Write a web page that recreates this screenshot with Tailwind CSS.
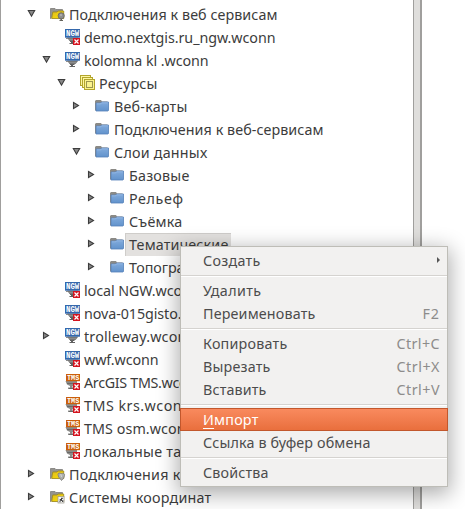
<!DOCTYPE html>
<html lang="ru">
<head>
<meta charset="utf-8">
<title>Каталог</title>
<script src="https://cdn.jsdelivr.net/npm/@tailwindcss/browser@4"></script>
</head>
<body class="bg-white">
<svg class="absolute w-0 h-0">
  <defs>
    <linearGradient id="gy" x1="0" y1="0" x2="1" y2="1"><stop offset="0" stop-color="#dcbc20"/><stop offset="1" stop-color="#ffe000"/></linearGradient>
    <linearGradient id="gb" x1="0" y1="0" x2="0" y2="1"><stop offset="0" stop-color="#82abdc"/><stop offset="1" stop-color="#6293cc"/></linearGradient>
    <symbol id="folder" viewBox="0 0 16 16">
      <path d="M0 12.5V3L1 2H6L7 3.5H12.5V12.5Z" fill="#8b8a86"/>
      <path d="M1 5H5.5L6.5 4H13.5V12.5L13 13H1Z" fill="url(#gb)" stroke="#5582b9" stroke-width=".8"/>
      <path d="M1.8 5.8H5.8L6.8 4.8H12.8" fill="none" stroke="#a0c2ea" stroke-width=".7"/>
    </symbol>
    <symbol id="yfolder" viewBox="0 0 16 16">
      <path d="M.5 12.5V2.5H5L6 3.5H12.5V6H3L1 12.5Z" fill="#94938f" stroke="#7d7c78" stroke-width=".8"/>
      <path d="M1.7 12.5L2.8 6H7L8 5H13.7V12.6Z" fill="url(#gy)" stroke="#a08d20" stroke-width=".9"/>
    </symbol>
    <symbol id="web" viewBox="0 0 16 16">
      <use href="#yfolder"/>
      <path d="M11.2 12.5V14.5" stroke="#66645c" stroke-width="1.5"/>
      <circle cx="11.2" cy="9.8" r="3.1" fill="#8d8d8b" stroke="#65645e" stroke-width=".8"/>
      <path d="M10 8.2L12 8.6L11 10.4Z" fill="#c9c9c5"/><path d="M9.5 14.5H13" stroke="#66645c"/>
    </symbol>
    <symbol id="dbf" viewBox="0 0 16 16">
      <use href="#yfolder"/>
      <path d="M8 8.5C8 6.6 10 7 11.2 7.5C13 6.8 15 7.5 14.5 9.5L13.7 12L11.5 14.5L10 12.5L8.6 11Z" fill="#aeb0ad" stroke="#797a76" stroke-width=".8"/>
      <path d="M10.8 8L11.5 11" stroke="#d8d9d6"/>
    </symbol>
    <symbol id="crs" viewBox="0 0 16 16">
      <use href="#yfolder"/>
      <rect x="8" y="7.5" width="6" height="6.5" fill="#f5f5f3" stroke="#99968a" stroke-width=".7"/>
      <path d="M9.3 10H11V8.7H12.8V10H12V11.3H13.3V13H12V12H10.5V13.3H9.5V11.5H10.5Z" fill="#444"/>
    </symbol>
    <symbol id="layers" viewBox="0 0 16 16">
      <rect x=".5" y=".5" width="10" height="10" fill="#fdf6a0" stroke="#b3a52b"/>
      <rect x="2.5" y="2.5" width="10" height="10" fill="#fdf6a0" stroke="#b3a52b"/>
      <rect x="4.5" y="4.5" width="10" height="10" fill="#fbf38c" stroke="#b3a52b"/>
      <rect x="6.5" y="6.5" width="6" height="6" fill="none" stroke="#3d3912" stroke-dasharray="1 1"/>
    </symbol>
    <symbol id="stand" viewBox="0 0 16 16">
      <path d="M2 8.5H13.5L10.5 12H4.5Z" fill="#777"/>
      <path d="M1 9.5H3M4 10.5H11" stroke="#8c8c8c"/>
      <path d="M5 12H9.5V13H8V14H10V15H4.5V14H6V13H5Z" fill="#606060"/>
    </symbol>
    <symbol id="ngw" viewBox="0 0 16 16">
      <use href="#stand"/><rect x="0" y="0" width="15" height="8.7" fill="#3568ac"/>
      <text x="1" y="7.2" textLength="13.2" lengthAdjust="spacingAndGlyphs" font-family="Liberation Mono, monospace" font-weight="bold" font-size="8.6" fill="#fff">NGW</text>
    </symbol>
    <symbol id="tms" viewBox="0 0 16 16">
      <path d="M.5 7H12V10.5L9 12H7.5V13.5H9.5V15H3V13.5H5V12L2 10.5Z" fill="#8b8b89"/>
      <path d="M2 9.5H9M4 14.5H9" stroke="#6a6a68"/>
      <rect x="1" y="0" width="14" height="7.2" fill="#cb5f0c"/>
      <text x="2" y="6.2" textLength="12.2" lengthAdjust="spacingAndGlyphs" font-family="Liberation Mono, monospace" font-weight="bold" font-size="8" fill="#fff">TMS</text>
    </symbol>
    <symbol id="off" viewBox="0 0 16 16">
      <rect x="8" y="9" width="7" height="7" fill="#d4141f"/>
      <path d="M9.5 10.5L13.5 14.5M13.5 10.5L9.5 14.5" stroke="#fff" stroke-width="1.2"/>
    </symbol>
    <symbol id="open" viewBox="0 0 9 9"><path d="M1.3 1.5H7.7L4.5 7.2Z" fill="#888" stroke="#3c3c3c" stroke-width="1.1"/></symbol>
    <symbol id="closed" viewBox="0 0 9 9"><path d="M1.5 1.5V7.5L6.5 4.5Z" fill="#888" stroke="#3c3c3c" stroke-width="1.1"/></symbol>
  </defs>
</svg>

<main class="relative flex w-[465px] h-[509px] overflow-hidden bg-white font-['Noto_Sans',sans-serif] text-[14.3px] leading-[23px] text-[#3c3c3c] whitespace-pre">
  <div class="w-px shrink-0 bg-[#a09f9d]"></div>
  <div id="tree" class="flex flex-col w-[412px] shrink-0 pt-[3px]"></div>
  <div class="w-[9px] shrink-0 border-l border-r-2 border-[#a09f9d] bg-[#dfdedc]"></div>
  <nav id="menu" class="absolute left-[180px] top-[246px] w-[268px] h-[241px] border border-[#bebdb7] bg-[#f2f1f0] py-[2px] text-[#4c4c4c] shadow-[0_5px_20px_2px_rgba(0,0,0,0.33)]"></nav>
</main>

<script>
// [level, arrow, icon, offline, label, label width]
const rows = [
  [0,'open','web',0,'Подключения к веб сервисам',207],
  [1,'','ngw',1,'demo.nextgis.ru_ngw.wconn',190],
  [1,'open','ngw',0,'kolomna kl .wconn',123],
  [2,'open','layers',0,'Ресурсы',57],
  [3,'closed','folder',0,'Веб-карты',72],
  [3,'closed','folder',0,'Подключения к веб-сервисам',208],
  [3,'open','folder',0,'Слои данных',92],
  [4,'closed','folder',0,'Базовые',59],
  [4,'closed','folder',0,'Рельеф',53],
  [4,'closed','folder',0,'Съёмка',52],
  [4,'closed','folder',0,'Тематические',98],
  [4,'closed','folder',0,'Топогра',54],
  [1,'','ngw',1,'local NGW.wconn',114],
  [1,'','ngw',1,'nova-015gisto.',96],
  [1,'closed','ngw',0,'trolleway.wconn',110],
  [1,'','ngw',1,'wwf.wconn',73],
  [1,'','tms',1,'ArcGIS TMS.wconn',119],
  [1,'','tms',1,'TMS krs.wconn',106],
  [1,'','tms',1,'TMS osm.wconn',109],
  [1,'','tms',1,'локальные та',96],
  [0,'closed','dbf',0,'Подключения к',110],
  [0,'closed','crs',0,'Системы координат',141]
];
const items = [
  ['Создать',56,'>'],0,['Удалить',57],['Переименовать',111,'F2',16],0,
  ['Копировать',83,'Ctrl+C',42],['Вырезать',66,'Ctrl+X',42],['Вставить',62,'Ctrl+V',42],0,
  ['<u class="underline underline-offset-[3px] decoration-1">И</u>мпорт',54,'hot'],['Ссылка в буфер обмена',166],0,['Свойства',64]
];
document.getElementById('tree').innerHTML = rows.map(([lv,arrow,icon,off,label,w],i)=>`
  <div class="flex h-[23px] shrink-0" style="padding-left:${26+lv*15}px">
    <svg class="w-[9px] h-[9px] mt-[6px] mr-[14px] shrink-0">${arrow?`<use href="#${arrow}"/>`:''}</svg>
    <svg class="w-[16px] h-[16px] mt-[3px] shrink-0"><use href="#${icon}"/>${off?'<use href="#off"/>':''}</svg>
    <div class="${i===10?'h-[23px] w-[106px] -ml-px pl-[3px] border-t border-l border-[#cfcdca] bg-[#e3e1df] leading-[22px]':'pl-[3px]'}"><span class="inline-block" data-w="${w}">${label}</span></div>
  </div>`).join('');
document.getElementById('menu').innerHTML = items.map(it=>{
  if(!it) return '<div class="h-[7px] pt-[3px]"><div class="h-[2px] border-t border-[#d5d3d0] bg-white"></div></div>';
  const [label,w,key,kw] = it, hot = key==='hot';
  return `<div class="flex h-[23px] justify-between pr-[7px] ${hot?'-mx-px pl-[22px] border border-[#c2572c] bg-linear-to-b from-[#f98a5e] to-[#e96f3d] text-white leading-[21px]':'pl-[22px]'}">
    <span class="inline-block" data-w="${w}">${label}</span>
    ${key==='>'?'<svg class="w-[3px] h-[6px] mt-[8px]" viewBox="0 0 3 6"><path d="M0 0L3 3L0 6Z" fill="#555"/></svg>':key&&!hot?`<span class="inline-block text-[#8d8c8b]" data-w="${kw}">${key}</span>`:''}
  </div>`}).join('');
// Even out the tracking so each label takes its set width
function fit(){
  document.querySelectorAll('[data-w]').forEach(e=>{
    let s=0; const n=e.textContent.length;
    e.style.letterSpacing='0px';
    for(let i=0;i<3;i++){
      s+=(+e.dataset.w+1.5-e.getBoundingClientRect().width)/n;
      e.style.letterSpacing=s.toFixed(3)+'px';
    }
  });
}
fit();
addEventListener('load',()=>{fit();requestAnimationFrame(fit);});
document.fonts.ready.then(fit);
</script>
</body>
</html>
